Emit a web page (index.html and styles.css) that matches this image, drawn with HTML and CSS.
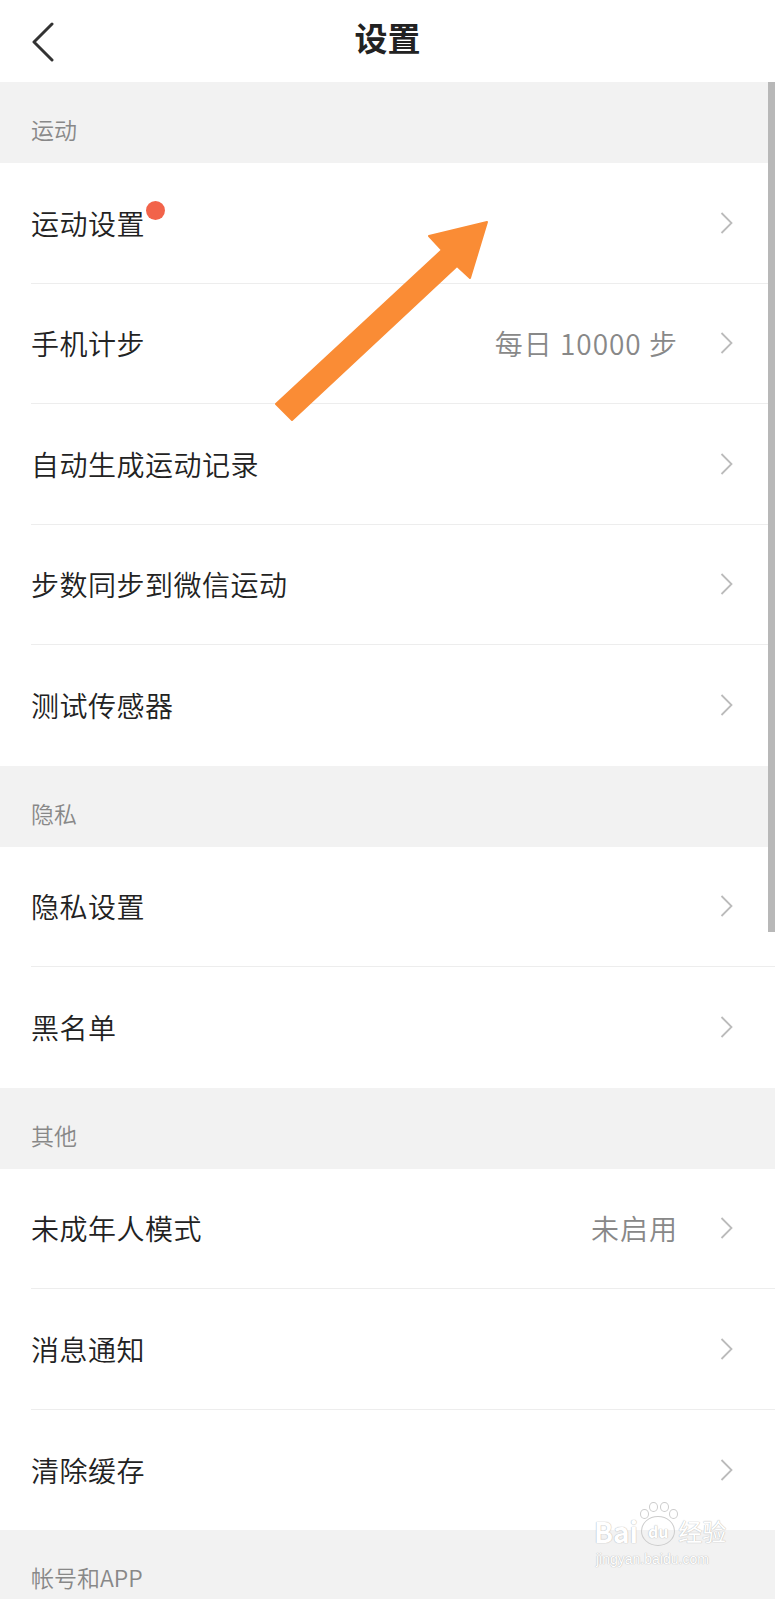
FILE: index.html
```html
<!DOCTYPE html>
<html>
  <head>
    <meta charset="utf-8">
    <title>设置</title>
    <link rel="stylesheet" href="styles.css">
  </head>

  <body>
    <div class="page">
      <!-- Top bar -->
      <div class="topbar">
        <div class="back">
          <svg width="26" height="40" viewBox="0 0 26 40"><polyline points="21,2 3,20 21,38" fill="none" stroke="#333" stroke-width="3" stroke-linecap="round" stroke-linejoin="round"/></svg>
        </div>
        <h1>设置</h1>
        <div></div>
      </div>

      <!-- 运动 -->
      <div class="section-title">运动</div>
      <div class="group">
        <div class="item"><span class="label">运动设置<i class="dot"></i></span><span class="arrow"></span></div>
        <div class="item"><span class="label">手机计步</span><span class="value">每日 10000 步</span><span class="arrow"></span></div>
        <div class="item"><span class="label">自动生成运动记录</span><span class="arrow"></span></div>
        <div class="item"><span class="label">步数同步到微信运动</span><span class="arrow"></span></div>
        <div class="item"><span class="label">测试传感器</span><span class="arrow"></span></div>
      </div>

      <!-- 隐私 -->
      <div class="section-title">隐私</div>
      <div class="group">
        <div class="item"><span class="label">隐私设置</span><span class="arrow"></span></div>
        <div class="item"><span class="label">黑名单</span><span class="arrow"></span></div>
      </div>

      <!-- 其他 -->
      <div class="section-title">其他</div>
      <div class="group">
        <div class="item"><span class="label">未成年人模式</span><span class="value">未启用</span><span class="arrow"></span></div>
        <div class="item"><span class="label">消息通知</span><span class="arrow"></span></div>
        <div class="item"><span class="label">清除缓存</span><span class="arrow"></span></div>
      </div>

      <div class="section-title">帐号和APP</div>

      <!-- overlays -->
      <div class="scrollbar"></div>

      <svg class="annotation" width="775" height="460" viewBox="0 0 775 460">
        <polygon points="276,404 442,250 429,236 487,222 470,278 457,266 292,420" fill="#fa8c35" stroke="#fa8c35" stroke-width="2" stroke-linejoin="round"/>
      </svg>

      <div class="watermark">
        <div class="wm-logo">
          <span>Bai</span>
          <span class="wm-paw">
            <i class="toe t1"></i><i class="toe t2"></i><i class="toe t3"></i><i class="toe t4"></i>
            <span class="wm-du">du</span>
          </span>
          <span class="wm-cn">经验</span>
        </div>
        <div class="wm-url">jingyan.baidu.com</div>
      </div>
    </div>
  </body>
</html>
```

FILE: styles.css
```css
* {
  margin: 0;
  padding: 0;
  box-sizing: border-box;
  font-family: 'Noto Sans CJK SC', 'Noto Sans', sans-serif;
}

body {
  background: #f2f2f2;
  width: 775px;
  overflow: hidden;
}

.page {
  position: relative;
  width: 775px;
  height: 1599px;
  background: #f2f2f2;
  overflow: hidden;
}

.topbar {
  display: grid;
  grid-template-columns: 1fr auto 1fr;
  align-items: center;
  height: 82px;
  background: #fff;
}

.back {
  padding-left: 31px;
  padding-top: 2px;
  display: flex;
}

.topbar h1 {
  font-size: 33px;
  font-weight: 700;
  color: #222;
  line-height: 40px;
  margin-top: -8px;
}

.section-title {
  height: 81px;
  padding: 34px 0 0 31px;
  font-size: 23px;
  line-height: 26px;
  font-weight: 350;
  color: #888;
}

.group {
  background: #fff;
}

.item {
  display: flex;
  align-items: center;
  height: 120.5px;
  margin-left: 31px;
  padding-right: 42px;
  border-bottom: 1px solid #ededed;
}

.item:last-child {
  border-bottom: none;
}

.label {
  position: relative;
  flex: 1;
  font-size: 28px;
  font-weight: 350;
  color: #222;
  line-height: 34px;
  letter-spacing: 0.5px;
}

.dot {
  position: absolute;
  left: 115px;
  top: -5px;
  width: 19px;
  height: 19px;
  border-radius: 50%;
  background: #f2634a;
}

.value {
  font-size: 28px;
  font-weight: 350;
  color: #888;
  line-height: 34px;
  letter-spacing: 1px;
  margin-right: 42px;
}

.arrow {
  width: 13px;
  height: 22px;
  background: no-repeat center / 13px 22px url("data:image/svg+xml,%3Csvg xmlns='http://www.w3.org/2000/svg' width='13' height='22' viewBox='0 0 13 22'%3E%3Cpolyline points='1.5,1 11.5,11 1.5,21' fill='none' stroke='%23bbb' stroke-width='1.8'/%3E%3C/svg%3E");
}

.scrollbar {
  position: absolute;
  top: 82px;
  right: 0;
  width: 7px;
  height: 850px;
  background: #b8b8b8;
}

.annotation {
  position: absolute;
  left: 0;
  top: 0;
}

.watermark {
  position: absolute;
  left: 594px;
  top: 1516px;
  color: #fff;
  text-shadow: 0 0 1px #bbb, 0 0 1px #bbb;
}

.wm-logo {
  display: flex;
  align-items: center;
  font-family: 'Liberation Sans', sans-serif;
  font-size: 28px;
  font-weight: 700;
  line-height: 30px;
}

.wm-paw {
  position: relative;
  display: inline-flex;
  align-items: center;
  justify-content: center;
  width: 34px;
  height: 30px;
  margin: 0 3px;
  border-radius: 50%;
  border: 1.5px solid #ccc;
}

.wm-du {
  font-size: 16px;
  line-height: 16px;
}

.toe {
  position: absolute;
  width: 9px;
  height: 10px;
  border-radius: 50%;
  border: 1.5px solid #ccc;
  top: -16px;
}

.t1 { left: -2px; top: -8px; }
.t2 { left: 7px; top: -15px; }
.t3 { left: 18px; top: -15px; }
.t4 { left: 27px; top: -8px; }

.wm-cn {
  font-family: 'Noto Sans CJK SC', sans-serif;
  font-size: 24px;
  font-weight: 400;
}

.wm-url {
  font-family: 'Liberation Sans', sans-serif;
  font-size: 14px;
  line-height: 18px;
  margin-top: 4px;
  padding-left: 2px;
}
```
